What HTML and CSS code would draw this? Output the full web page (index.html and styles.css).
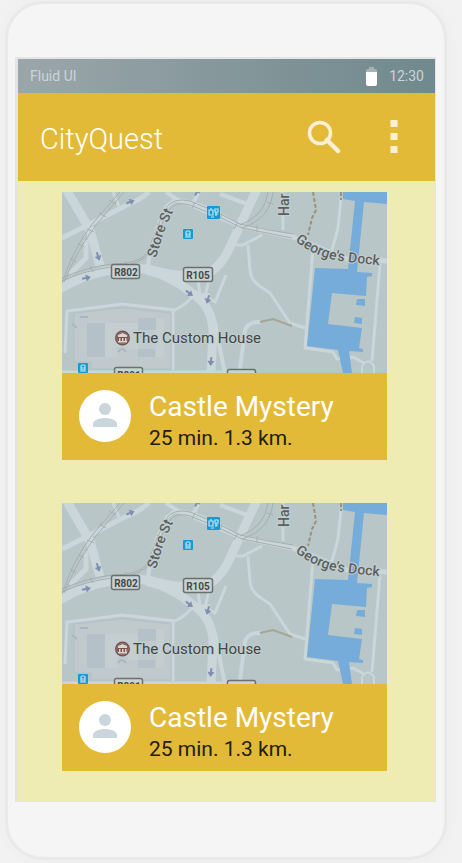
FILE: index.html
```html
<!DOCTYPE html>
<html lang="en">
<head>
<meta charset="utf-8">
<meta name="viewport" content="width=device-width, initial-scale=1">
<title>CityQuest</title>
<link rel="stylesheet" href="styles.css">
</head>
<body>
<svg class="defs" aria-hidden="true">
  <defs>
    <path id="store-path" d="M94 66C98 54 102 35 113 16"/>
    <path id="dock-path" d="M233 49C247 60 263 68 286 70L324 74"/>
    <g id="arrow"><path d="M-4 0H1" stroke="#7f8fb0" stroke-width="2"/><path d="M0 -3.5L5 0L0 3.5Z" fill="#7f8fb0"/></g>
    <g id="city-map">
      <rect width="325" height="181" fill="#b9c6c7"/>
      <g fill="none" stroke="#cad6da" stroke-linejoin="round">
        <path d="M4 -3L28 38L38 74" stroke-width="9"/>
        <path d="M24 48L24 66L8 82" stroke-width="5"/>
        <path d="M0 46L26 33L63 14Q78 8 87 0" stroke-width="5"/>
        <path d="M51 0L57 14" stroke-width="3"/>
        <path d="M-2 97Q18 84 44 79T90 78Q115 85 140 84Q158 78 168 55L195 -3" stroke-width="9"/>
        <path d="M84 78Q108 83 130 101Q151 115 151 140L149 181" stroke-width="9"/>
        <path d="M148 84L143 104L153 110L164 83M136 88L138 103L148 103" stroke-width="3"/>
        <path d="M153 130Q158 158 163 181" stroke-width="4"/>
        <path d="M86 74Q90 42 105 14L113 8Q143 10 178 35" stroke-width="4"/>
        <path d="M104 0L116 8L130 13L137 0M158 2L185 12" stroke-width="4"/>
        <path d="M130 13L178 34L231 45L258 56L285 67L325 69" stroke-width="5"/>
        <path d="M221 0V38M279 6L276 36L270 58M200 43L181 53H174" stroke-width="3"/>
        <path d="M186 53L188 78Q189 89 199 95L208 101L228 131L243 136" stroke-width="3"/>
        <path d="M251 56L243 156L271 160L275 167L291 165L302 171M318 72L310 169" stroke-width="3"/>
        <path d="M300 181V174Q306 165 312 174V181" stroke-width="2"/>
        <path d="M199 130Q187 129 183 138L178 177" stroke-width="4"/>
        <path d="M3 161L5 119Q30 116 60 112L113 118Q122 114 130 105M111 118V178" stroke-width="3"/>
        <path d="M0 180H178" stroke-width="3"/>
      </g>
      <path d="M12 121L60 116L109 121V177H29V170H12Z" fill="#c0cacd" stroke="#b3c0c5"/>
      <path d="M25 131H43V165H25ZM76 126H94V138H76ZM76 157H93V165H76Z" fill="#b4c1c8"/>
      <path d="M43 131H76V157H67Q61 145 55 157V165H43ZM94 126H102V165H94" fill="#c4ced0"/>
      <path d="M10 132L15 136M18 125H26M56 160Q60 154 64 160" fill="none" stroke="#a9b6c3" stroke-width="2"/>
      <g fill="none" stroke="#a6afae" stroke-width="1">
        <path d="M58 0L31 31Q11 57 0 91M62 0L34 33Q15 58 2 90"/>
        <path d="M0 86Q25 75 50 72Q77 72 85 61Q93 38 104 16Q111 5 128 9Q155 19 178 32Q204 38 231 42"/>
        <path d="M0 89Q24 78 50 75Q79 74 89 59Q98 34 108 17Q114 9 128 13Q155 23 180 36L230 46"/>
        <path d="M206 0Q203 24 178 33M211 0Q208 27 180 36"/>
        <path d="M47 8L54 12M37 21L44 25M25 37L32 40M16 51L22 55M8 66L14 70M28 74L31 80M63 69L66 75M95 32L102 35M133 10L130 16M160 21L158 27M195 33V40M205 10L211 12M176 30L172 37"/>
      </g>
      <path d="M251 0L254 18L250 26L246 43M279 0V8" fill="none" stroke="#9a927a" stroke-width="2" stroke-dasharray="4 2"/>
      <path d="M198 130L211 127L230 134" fill="none" stroke="#a5a694" stroke-width="2"/>
      <path d="M281 0H325V12L302 10L295 80L310 81V84L305 85L304 104L270 101L266 132L300 136L297 156L301 157V160L287 159L290 181H281L276 158L245 154L253 76L286 77L293 9L281 7ZM295 107H303V114L294 113ZM293 125L300 126V132L292 131Z" fill="#76acd9"/>
      <use href="#arrow" transform="translate(68 10) rotate(-22)"/>
      <use href="#arrow" transform="translate(36 64) rotate(72)"/>
      <use href="#arrow" transform="translate(24 86) rotate(-12)"/>
      <use href="#arrow" transform="translate(127 101) rotate(38)"/>
      <use href="#arrow" transform="translate(146 107) rotate(105)"/>
      <use href="#arrow" transform="translate(149 169) rotate(96)"/>
      <use href="#arrow" transform="translate(135 0) rotate(-60)"/>
      <g fill="#cbd3d2" stroke="#69706f" stroke-width="1.5">
        <rect x="49.500" y="72.500" width="28" height="14" rx="2"/>
        <rect x="121.500" y="75.500" width="29" height="14" rx="2"/>
        <rect x="52.500" y="175.500" width="28" height="14" rx="2"/>
        <rect x="165.500" y="177.500" width="28" height="14" rx="2"/>
      </g>
      <g fill="#149bd7">
        <rect x="145" y="14" width="13" height="13" rx="1"/>
        <rect x="121" y="37" width="10" height="10" rx="1"/>
        <rect x="16" y="171" width="10" height="10" rx="1"/>
      </g>
      <g fill="none" stroke="#c3e2ee" stroke-width="1.200">
        <path d="M147 23V18H151V23ZM149 16V18M153 17H156V20H153ZM153 22H156M154 20V24M149 25H152"/>
        <rect x="124" y="39" width="4" height="5" rx="1"/><path d="M124 42H128M123 45H129"/>
        <rect x="19" y="173" width="4" height="5" rx="1"/><path d="M19 176H23M18 179H24"/>
      </g>
      <circle cx="60.500" cy="146" r="7.500" fill="#75504b"/>
      <circle cx="60.500" cy="146" r="5.700" fill="none" stroke="#a18b87" stroke-width=".7"/>
      <path d="M56 145V143L60.500 141L65 143V145ZM57 146H58.500V149H57ZM60 146H61.500V149H60ZM63 146H64.500V149H63ZM56 149H65V150.500H56Z" fill="#ddd5d1"/>
    </g>
  </defs>
</svg>

<main class="phone">
  <div class="screen">
    <div class="status">
      <span>Fluid UI</span>
      <div class="status-right">
        <svg class="battery" viewBox="0 0 11 20" aria-hidden="true"><path d="M3 1H8V3H9Q11 3 11 5V6H0V5Q0 3 2 3H3Z" fill="#a5b4b7"/><path d="M0 6H11V18Q11 20 9 20H2Q0 20 0 18Z" fill="#fff"/></svg>
        <span>12:30</span>
      </div>
    </div>
    <header class="appbar">
      <h1>CityQuest</h1>
      <button class="icon-button" aria-label="Search"><svg viewBox="0 0 34 34" aria-hidden="true"><circle cx="13" cy="13" r="10.500" fill="none" stroke="#faf0d6" stroke-width="3.600"/><path d="M20 20L31 31" stroke="#faf0d6" stroke-width="4.500" stroke-linecap="round"/></svg></button>
      <button class="icon-button" aria-label="More options"><svg viewBox="0 0 34 34" aria-hidden="true"><path d="M13.500 0H20.500V7H13.500ZM13.500 13H20.500V20H13.500ZM13.500 26H20.500V33H13.500Z" fill="#faf0d6"/></svg></button>
    </header>
    <div class="quests">
      <article class="card">
        <svg class="map" viewBox="0 0 325 181" role="img" aria-label="Map">
          <use href="#city-map"/>
          <g class="street"><text><textPath href="#store-path">Store St</textPath></text><text><textPath href="#dock-path">George's Dock</textPath></text><text transform="translate(227 24) rotate(-90)">Har</text></g>
          <g class="route"><text x="64" y="84">R802</text><text x="136" y="87">R105</text><text x="67" y="187">R801</text></g>
          <text class="place" x="71" y="151">The Custom House</text>
        </svg>
        <div class="info">
          <svg class="avatar" viewBox="0 0 52 52" aria-hidden="true"><circle cx="26" cy="26" r="26" fill="#fff"/><circle cx="26" cy="19" r="6" fill="#cbd6dc"/><path d="M14 37V34C14 30 21 28 26 28S38 30 38 34V37Z" fill="#cbd6dc"/></svg>
          <div><h2>Castle Mystery</h2><p>25 min. 1.3 km.</p></div>
        </div>
      </article>
      <article class="card">
        <svg class="map" viewBox="0 0 325 181" role="img" aria-label="Map">
          <use href="#city-map"/>
          <g class="street"><text><textPath href="#store-path">Store St</textPath></text><text><textPath href="#dock-path">George's Dock</textPath></text><text transform="translate(227 24) rotate(-90)">Har</text></g>
          <g class="route"><text x="64" y="84">R802</text><text x="136" y="87">R105</text><text x="67" y="187">R801</text></g>
          <text class="place" x="71" y="151">The Custom House</text>
        </svg>
        <div class="info">
          <svg class="avatar" viewBox="0 0 52 52" aria-hidden="true"><circle cx="26" cy="26" r="26" fill="#fff"/><circle cx="26" cy="19" r="6" fill="#cbd6dc"/><path d="M14 37V34C14 30 21 28 26 28S38 30 38 34V37Z" fill="#cbd6dc"/></svg>
          <div><h2>Castle Mystery</h2><p>25 min. 1.3 km.</p></div>
        </div>
      </article>
    </div>
  </div>
</main>
</body>
</html>
```
FILE: styles.css
```css
* { box-sizing: border-box; }
body {
  margin: 0;
  padding: 1px 15px 3px 5px;
  background: #f2f2f2;
  font-family: Roboto, "Liberation Sans", sans-serif;
}
h1, h2, p { margin: 0; font-weight: 400; }
.defs { display: block; width: 0; height: 0; }
.phone {
  padding: 53px 8px 55px 7px;
  border: 3px solid #e9e9e9;
  border-radius: 38px;
  background: #f5f5f5;
  box-shadow: 0 0 16px #ececec;
}
.screen {
  border: solid #e4e4e4;
  border-width: 2px 1px 1px 3px;
  background: #eeebb3;
}
.status {
  display: flex;
  align-items: center;
  justify-content: space-between;
  height: 34px;
  padding: 0 11px 0 12px;
  background: linear-gradient(90deg, #9ba6aa, #85979b 50%, #70898d);
  color: #c9d5d9;
  font-size: 14px;
}
.status-right { display: flex; align-items: center; gap: 12px; }
.battery { width: 11px; height: 20px; }
.appbar {
  display: flex;
  align-items: center;
  gap: 36px;
  height: 88px;
  padding: 0 24px 0 22px;
  background: #e3ba38;
}
.appbar h1 {
  flex: 1;
  padding-top: 4px;
  color: #fff;
  font-size: 29px;
  font-weight: 300;
  line-height: 36px;
}
.icon-button {
  width: 34px;
  height: 34px;
  padding: 0;
  border: 0;
  background: none;
}
.icon-button svg { display: block; width: 34px; height: 34px; }
.quests {
  display: flex;
  flex-direction: column;
  gap: 43px;
  padding: 11px 48px 30px 44px;
}
.card { background: #e3ba38; }
.map { display: block; width: 100%; overflow: hidden; }
.info {
  display: flex;
  gap: 18px;
  height: 87px;
  padding: 17px;
}
.avatar { flex: none; width: 52px; height: 52px; }
.info h2 { color: #fff; font-size: 28px; line-height: 34px; }
.info p { color: #20200f; font-size: 21px; line-height: 28px; }
.street { fill: #596061; stroke: #c4cecf; stroke-width: 2px; paint-order: stroke; font-size: 14px; font-weight: 500; }
.route { fill: #444a4a; font-size: 10px; font-weight: 700; text-anchor: middle; }
.place { fill: #404647; stroke: #c4cecf; stroke-width: 2px; paint-order: stroke; font-size: 15px; }
```
